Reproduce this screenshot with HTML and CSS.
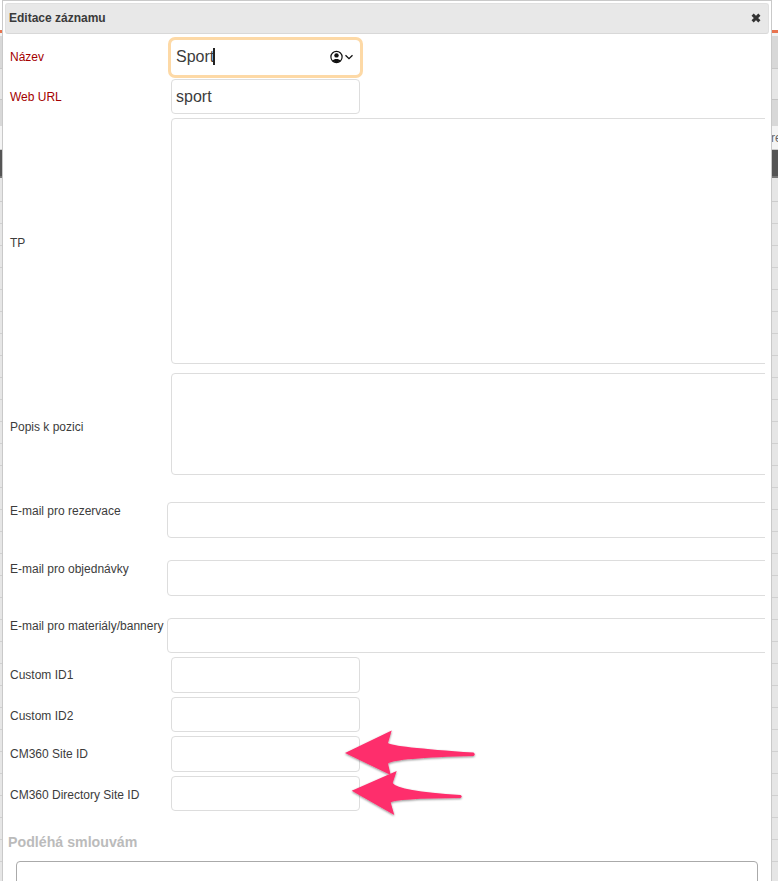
FILE: index.html
```html
<!DOCTYPE html>
<html lang="cs">
<head>
<meta charset="utf-8">
<title>Editace záznamu</title>
<link rel="stylesheet" href="styles.css">
</head>
<body>
<div class="backdrop">
  <div class="bg bg-top"></div>
  <div class="bg bg-orange"></div>
  <div class="bg bg-gap"></div>
  <div class="bg bg-a"></div>
  <div class="bg bg-b"></div>
  <div class="bg bg-c"></div>
  <div class="bg bg-text">re</div>
  <div class="bg bg-dark"></div>
  <div class="bg bg-d"></div>
  <div class="stripes">
    <div class="bg bg-row"></div><div class="bg bg-row"></div><div class="bg bg-row"></div><div class="bg bg-row"></div>
    <div class="bg bg-row"></div><div class="bg bg-row"></div><div class="bg bg-row"></div><div class="bg bg-row"></div>
    <div class="bg bg-row"></div><div class="bg bg-row"></div><div class="bg bg-row"></div><div class="bg bg-row"></div>
    <div class="bg bg-row"></div><div class="bg bg-row"></div><div class="bg bg-row"></div><div class="bg bg-row"></div>
    <div class="bg bg-row"></div><div class="bg bg-row"></div><div class="bg bg-row"></div><div class="bg bg-row"></div>
    <div class="bg bg-row"></div><div class="bg bg-row"></div><div class="bg bg-row"></div><div class="bg bg-row"></div>
    <div class="bg bg-row"></div><div class="bg bg-row"></div><div class="bg bg-row"></div><div class="bg bg-row"></div>
    <div class="bg bg-row"></div><div class="bg bg-row"></div><div class="bg bg-row"></div><div class="bg bg-row"></div>
  </div>
</div>

<section class="dialog">
  <header class="dialog-head">
    <h1 class="dialog-title">Editace záznamu</h1>
    <svg class="close-icon" width="10" height="10" viewBox="0 0 10 10" aria-hidden="true">
      <path d="M1.6 1.6 L8.4 8.4 M8.4 1.6 L1.6 8.4" fill="none" stroke="#333" stroke-width="3"/>
    </svg>
  </header>

  <form class="form">
    <div class="row row-first">
      <label class="label label-req">Název</label>
      <div class="field field-focus">
        <input class="input input-short input-focus" type="text" value="Sport">
        <span class="caret"></span>
        <svg class="autofill-icon" width="25" height="14" viewBox="0 0 25 14" aria-hidden="true">
          <circle cx="6.5" cy="7" r="5.6" fill="#fff" stroke="#111" stroke-width="1.2"/>
          <circle cx="6.5" cy="5.4" r="2.2" fill="#111"/>
          <path d="M2.6 10.6 C3.6 8.4 9.4 8.4 10.4 10.6 C9 12.6 4 12.6 2.6 10.6 Z" fill="#111"/>
          <path d="M15.5 5.2 L19 8.7 L22.5 5.2" fill="none" stroke="#111" stroke-width="1.3"/>
        </svg>
      </div>
    </div>
    <div class="row">
      <label class="label label-req">Web URL</label>
      <input class="input input-short" type="text" value="sport">
    </div>
    <div class="row">
      <label class="label label-low">TP</label>
      <textarea class="input input-area area-tp"></textarea>
    </div>
    <div class="row row-popis">
      <label class="label label-popis">Popis k pozici</label>
      <textarea class="input input-area area-popis"></textarea>
    </div>
    <div class="row row-mail row-mail-first">
      <label class="label label-wide">E-mail pro rezervace</label>
      <input class="input input-mail" type="text">
    </div>
    <div class="row row-mail">
      <label class="label label-wide">E-mail pro objednávky</label>
      <input class="input input-mail" type="text">
    </div>
    <div class="row row-mail">
      <label class="label label-wide label-tight">E-mail pro materiály/bannery</label>
      <input class="input input-mail input-mail-last" type="text">
    </div>
    <div class="row row-custom">
      <label class="label">Custom ID1</label>
      <input class="input input-short input-custom" type="text">
    </div>
    <div class="row">
      <label class="label label-down-2">Custom ID2</label>
      <input class="input input-short input-custom" type="text">
    </div>
    <div class="row">
      <label class="label">CM360 Site ID</label>
      <input class="input input-short input-custom" type="text">
    </div>
    <div class="row">
      <label class="label label-down-1">CM360 Directory Site ID</label>
      <input class="input input-short input-custom" type="text">
    </div>
  </form>

  <h2 class="section-title">Podléhá smlouvám</h2>
  <div class="section-box"></div>
</section>

<svg class="arrows" width="778" height="881" viewBox="0 0 778 881" aria-hidden="true">
  <defs>
    <filter id="arrow-shadow" x="-10%" y="-10%" width="120%" height="130%">
      <feDropShadow dx="0" dy="1" stdDeviation="0.8" flood-color="#000" flood-opacity="0.45"/>
    </filter>
  </defs>
  <g fill="#fe2d6c" filter="url(#arrow-shadow)">
    <path d="M345 753 L391.7 730.5 L388 743 Q392 747 473.5 752.6 Q476 754.5 473.5 756 Q395 758 388 763.5 L390.7 775 Z"/>
    <path d="M351.7 790.7 L396.7 771 L392.7 783 Q398 791 460.5 795 Q463 796.5 460.5 798 Q395 798.5 390.7 802.5 L394.3 815 Z"/>
  </g>
</svg>
</body>
</html>
```

FILE: styles.css
```css
* {
  box-sizing: border-box;
}

html,
body {
  margin: 0;
  padding: 0;
  height: 881px;
  overflow: hidden;
  background: #e6e6e6;
  font-family: "Liberation Sans", Arial, sans-serif;
}

body {
  position: relative;
}

/* page behind the dialog */
.backdrop {
  display: flex;
  flex-direction: column;
  height: 881px;
  overflow: hidden;
}

.bg {
  flex: none;
}

.bg-top { height: 30px; background: #fff; }
.bg-orange { height: 3px; background: #e8734f; }
.bg-gap { height: 3px; background: #f2f2f2; }
.bg-a { height: 33px; background: #d8d8d8; border-bottom: 1px solid #c8c8c8; }
.bg-b { height: 31px; background: #e6e6e6; border-bottom: 1px solid #c4c4c4; }
.bg-c { height: 26px; background: #d8d8d8; }
.bg-text {
  height: 24px;
  line-height: 24px;
  padding-left: 771px;
  font-size: 12px;
  white-space: nowrap;
  overflow: hidden;
  color: #666;
  background: #f4f4f4;
  border-bottom: 1px solid #ccc;
}
.bg-dark { height: 28px; background: #555; border-bottom: 2px solid #777; }
.bg-d { height: 24px; background: #e6e6e6; border-bottom: 1px solid #ccc; }
.bg-row { height: 22px; background: #e6e6e6; border-bottom: 1px solid #d0d0d0; }

/* dialog */
.dialog {
  position: absolute;
  left: 2px;
  top: 0;
  width: 770px;
  height: 881px;
  background: #fff;
  border: 2px solid #c9c9c9;
  border-width: 1px 1px 0 1px;
  padding-top: 2px;
  overflow: hidden;
}

.dialog-head {
  display: flex;
  align-items: center;
  justify-content: space-between;
  height: 31px;
  margin: 0 2px 0 2px;
  padding: 0 7px 1px 3px;
  background: #e8e8e8;
  border: 1px solid #e0e0e0;
  border-bottom-color: #d8d8d8;
  border-radius: 3px;
}

.dialog-title {
  margin: 0;
  font-size: 12px;
  font-weight: bold;
  color: #3a3a3a;
}

.close-icon {
  display: block;
}

/* form */
.form {
  display: flex;
  flex-direction: column;
  gap: 4px;
  width: 762px;
  padding-top: 6px;
  overflow: hidden;
}

.row {
  display: flex;
  align-items: center;
  flex: none;
}

.row-popis {
  margin-top: 5px;
}

.row-mail {
  align-items: flex-start;
  margin-top: 18px;
}

.row-mail-first {
  margin-top: 23px;
}

.label {
  flex: none;
  width: 168px;
  padding-left: 7px;
  font-size: 12px;
  line-height: 16px;
  color: #3c3c3c;
}

.row-first .label {
  padding-bottom: 2px;
}

.label-req {
  color: #a40000;
}

.label-low {
  padding-top: 4px;
}

.label-popis {
  padding-top: 6px;
}

.label-wide {
  width: 164px;
  padding-top: 1px;
}

.label-tight {
  padding-top: 0;
}

.label-down-1 {
  padding-top: 2px;
}

.label-down-2 {
  padding-top: 4px;
}

.input {
  display: block;
  flex: none;
  margin: 0;
  padding: 0 4px;
  background: #fff;
  border: 1px solid #ddd;
  border-radius: 4px;
  outline: none;
  font-family: "Liberation Sans", Arial, sans-serif;
  font-size: 16px;
  color: #3c3c3c;
  resize: none;
}

.input-short {
  width: 189px;
  height: 35px;
}

.input-custom {
  height: 35.6px;
}

.input-area {
  width: 640px;
}

.area-tp {
  height: 246px;
}

.area-popis {
  height: 102px;
}

.input-mail {
  width: 640px;
  height: 36px;
}

.input-mail-last {
  height: 35px;
}

.field {
  position: relative;
  flex: none;
}

.input-focus {
  border-color: #fff;
  padding-bottom: 2px;
  box-shadow: 0 0 0 3px #fdd9a6;
}

.caret {
  position: absolute;
  left: 42px;
  top: 8px;
  width: 2px;
  height: 17px;
  background: #222;
}

.autofill-icon {
  position: absolute;
  left: 158.5px;
  top: 10px;
}

/* lower section */
.section-title {
  margin: 22px 0 0 5px;
  font-size: 14.2px;
  line-height: 18px;
  font-weight: bold;
  color: #bbb;
}

.section-box {
  width: 742px;
  height: 60px;
  margin: 10px 0 0 13px;
  background: #fff;
  border: 1px solid #aaa;
  border-radius: 4px;
}

/* annotation arrows */
.arrows {
  position: absolute;
  left: 0;
  top: 0;
  pointer-events: none;
}
```
